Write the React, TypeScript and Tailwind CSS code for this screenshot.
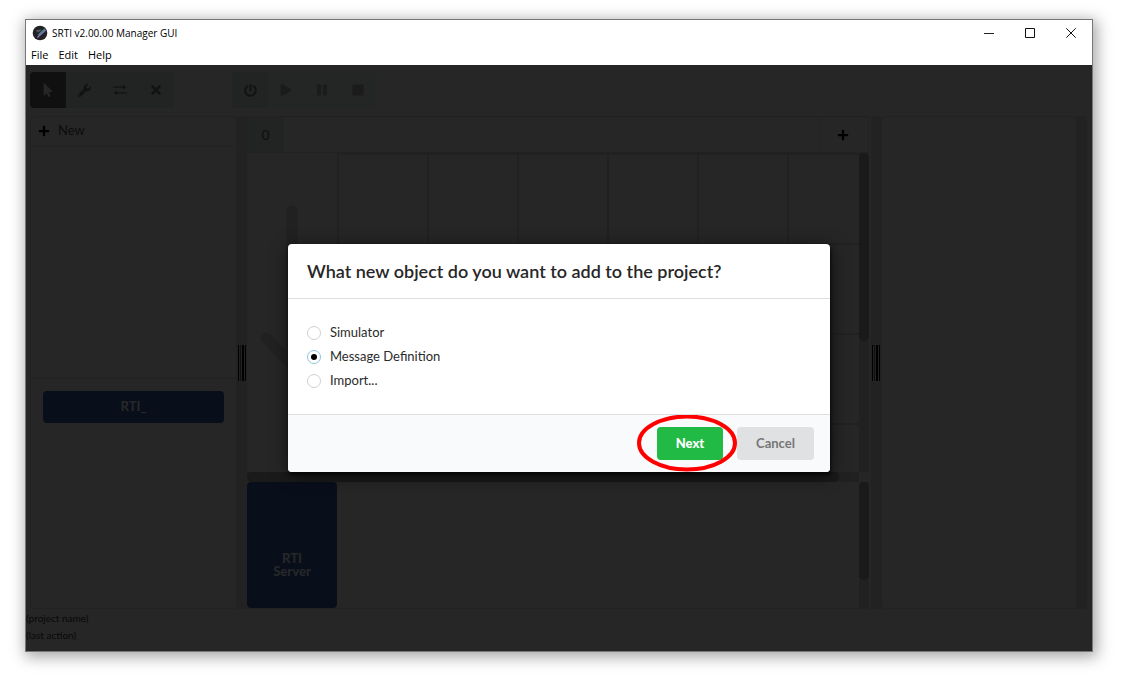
import { useState } from 'react';
import type { ReactNode } from 'react';
import {
  FaMousePointer,
  FaWrench,
  FaTimes,
  FaPowerOff,
  FaPlay,
  FaPlus,
} from 'react-icons/fa';

const MENUS = ['File', 'Edit', 'Help'];
const OBJECT_TYPES = ['Simulator', 'Message Definition', 'Import...'];
const STAGE_ROWS = [0, 1, 2, 3];
const STAGE_COLUMNS = [0, 1, 2, 3, 4, 5];

function AppLogo() {
  return (
    <svg viewBox="0 0 16 16" className="size-4" aria-hidden="true">
      <circle cx="8" cy="8" r="7.3" fill="#222226" />
      <path d="M6.200 10.200 12.800 4" stroke="#3f8f88" strokeWidth="1.300" />
      <path d="M5.400 12.600 13.600 5" stroke="#8a6fc0" strokeWidth="1.300" />
      <path d="M3.600 5.400 7.500 4.600 10 5.200 6 7.400Z" fill="#55555c" />
    </svg>
  );
}

function ExchangeIcon() {
  return (
    <svg viewBox="0 0 14 12" width="14" height="12" fill="currentColor" aria-hidden="true">
      <path d="M.6 2.600h9.400V.8L13.400 3.200 10 5.600V3.800H.6Z" />
      <path d="M13.400 8.200H4V6.400L.6 8.800 4 11.200V9.400h9.400Z" />
    </svg>
  );
}

function PauseIcon() {
  return (
    <svg viewBox="0 0 12 12" width="12" height="12" fill="currentColor" aria-hidden="true">
      <rect x="1" y=".5" width="4" height="11" rx=".8" />
      <rect x="7" y=".5" width="4" height="11" rx=".8" />
    </svg>
  );
}

function StopIcon() {
  return (
    <svg viewBox="0 0 12 12" width="12" height="12" fill="currentColor" aria-hidden="true">
      <rect x=".5" y=".5" width="11" height="11" rx="1" />
    </svg>
  );
}

function ToolButton({ label, className, children }: { label: string; className: string; children: ReactNode }) {
  return (
    <button type="button" aria-label={label} className={`flex size-9 items-center justify-center text-sm ${className}`}>
      {children}
    </button>
  );
}

function TitleBar() {
  return (
    <header className="bg-white font-['Open_Sans',sans-serif] text-[11px] text-black">
      <div className="flex h-[26px] items-center justify-between pl-[6px]">
        <div className="flex items-center gap-1">
          <AppLogo />
          <span className="text-[10px]">SRTI v2.00.00 Manager GUI</span>
        </div>
        <div className="flex pr-px">
          <button type="button" aria-label="Minimize" className="flex h-6 w-[41px] items-center justify-center">
            <svg width="10" height="10" viewBox="0 0 10 10" stroke="#222"><path d="M0 5.500H10" /></svg>
          </button>
          <button type="button" aria-label="Maximize" className="flex h-6 w-[41px] items-center justify-center">
            <svg width="10" height="10" viewBox="0 0 10 10" stroke="#111" fill="none"><path d="M.5 .5H9.500V9.500H.5Z" /></svg>
          </button>
          <button type="button" aria-label="Close" className="flex h-6 w-[41px] items-center justify-center">
            <svg width="10" height="10" viewBox="0 0 10 10" stroke="#111"><path d="M.3 .3 9.700 9.700M9.700 .3 .3 9.700" /></svg>
          </button>
        </div>
      </div>
      <nav className="flex h-[19px] items-center gap-[10px] pl-[5px]">
        {MENUS.map((menu) => (
          <button key={menu} type="button">{menu}</button>
        ))}
      </nav>
    </header>
  );
}

function Toolbar() {
  return (
    <div className="flex gap-[58px] px-1 pt-[7px] pb-2 text-[#121212]">
      <div className="flex overflow-hidden rounded-sm bg-[#212423]">
        <ToolButton label="Select" className="bg-[#101010] text-[#262626]"><FaMousePointer /></ToolButton>
        <ToolButton label="Configure" className=""><FaWrench className="size-[13px]" /></ToolButton>
        <ToolButton label="Transfer" className=""><ExchangeIcon /></ToolButton>
        <ToolButton label="Delete" className=""><FaTimes /></ToolButton>
      </div>
      <div className="flex overflow-hidden rounded-sm bg-[#242525]">
        <ToolButton label="Power" className="bg-[#212423]"><FaPowerOff className="size-[13px]" /></ToolButton>
        <ToolButton label="Play" className="text-[#1b1b1b]"><FaPlay className="size-3" /></ToolButton>
        <ToolButton label="Pause" className="text-[#1b1b1b]"><PauseIcon /></ToolButton>
        <ToolButton label="Stop" className="text-[#1b1b1b]"><StopIcon /></ToolButton>
      </div>
    </div>
  );
}

function Splitter() {
  return (
    <div className="flex w-[10px] shrink-0 items-center justify-center gap-px bg-[#222]">
      <span className="h-9 w-px bg-black" />
      <span className="h-9 w-px bg-[#101010]" />
      <span className="h-9 w-[2px] bg-black" />
      <span className="h-9 w-px bg-black" />
    </div>
  );
}

function ObjectPanel() {
  return (
    <aside className="flex w-[207px] shrink-0 flex-col rounded-sm border border-[#222]">
      <button type="button" className="flex h-[30px] items-center gap-2 border-b border-[#222] px-[7px] pb-0.5 text-[13px] text-[#0c0c0c]">
        <FaPlus className="size-3 text-black" />
        New
      </button>
      <div className="h-[232px] border-b border-[#222]" />
      <div className="px-3 py-3">
        <button type="button" className="h-8 w-full rounded-sm bg-[#090e1b] text-[13px] font-black text-[#262728]">RTI_</button>
      </div>
    </aside>
  );
}

function Stage() {
  return (
    <main className="mr-[2px] flex min-w-0 flex-1 flex-col">
      <div className="flex h-[37px] border-t border-b border-[#212121] text-sm text-[#0e0e0e]">
        <button type="button" className="w-[37px] bg-[#212423]">0</button>
        <div className="flex-1" />
        <button type="button" aria-label="Add stage" className="flex w-[49px] items-center justify-center border-x border-[#232323] pr-1 text-black">
          <FaPlus className="size-3" />
        </button>
      </div>
      <div className="flex h-[319px]">
        <div className="flex min-w-0 flex-1 overflow-hidden">
          <div className="w-[90px] shrink-0 pt-[50px]">
            <svg viewBox="0 0 90 180" className="w-full" fill="none" stroke="#212121" strokeWidth="11" strokeLinecap="round" strokeLinejoin="round" aria-hidden="true">
              <path d="M45 8V162M19 135 45 162 71 135" />
            </svg>
          </div>
          {STAGE_COLUMNS.map((column) => (
            <div key={column} className="w-[90px] shrink-0 border-l-2 border-[#212121]">
              {STAGE_ROWS.map((row) => (
                <div key={row} className="h-[90px] border-t-2 border-[#212121]" />
              ))}
            </div>
          ))}
        </div>
        <div className="w-[10px] shrink-0 bg-[#212121]">
          <div className="h-[188px] rounded-full bg-[#1a1a1a]" />
        </div>
      </div>
      <div className="mr-[10px] h-[10px] bg-[#212121] pr-[20px]">
        <div className="h-full rounded-full bg-[#1a1a1a]" />
      </div>
      <div className="flex flex-1 justify-between border-b border-[#222]">
        <div className="flex w-[90px] flex-col justify-end rounded-sm bg-[#090e1b] px-5 pb-[30px]">
          <p className="text-center text-[13px] leading-[13px] font-black text-[#262728]">RTI Server</p>
        </div>
        <div className="w-[10px] bg-[#212121]">
          <div className="h-[98px] rounded-full bg-[#1a1a1a]" />
        </div>
      </div>
    </main>
  );
}

function PropertiesPanel() {
  return (
    <aside className="flex w-[206px] shrink-0 justify-end rounded-sm border border-[#222]">
      <div className="w-[10px] bg-[#222]" />
    </aside>
  );
}

function NewObjectDialog() {
  const [selected, setSelected] = useState('Message Definition');
  return (
    <div className="absolute inset-0 flex items-center justify-center">
      <section role="dialog" aria-labelledby="dialog-title" className="w-[542px] overflow-hidden rounded-sm bg-white shadow-[1px_3px_3px_0_rgba(0,0,0,0.6),1px_3px_15px_2px_rgba(0,0,0,0.5)]">
        <h2 id="dialog-title" className="border-b border-[#dedede] px-[19px] py-[15px] text-lg leading-6 font-semibold text-[#272727]">
          What new object do you want to add to the project?
        </h2>
        <fieldset className="flex flex-col gap-1 px-[19px] pt-6 pb-[23px]">
          {OBJECT_TYPES.map((type) => (
            <label key={type} className="flex h-5 items-center gap-[9px] text-[13px] text-[#2b2b2b]">
              <input
                type="radio"
                name="object-type"
                checked={selected === type}
                onChange={() => setSelected(type)}
                className="flex size-[14px] appearance-none items-center justify-center rounded-full border border-[#d0d0d1] bg-white checked:border-[#8cc6dc] checked:before:size-[6px] checked:before:rounded-full checked:before:bg-black"
              />
              {type}
            </label>
          ))}
        </fieldset>
        <footer className="flex justify-end gap-[14px] border-t border-[#dddede] bg-[#f9fafb] px-4 py-3 text-[13px] font-bold">
          <div className="relative">
            <button type="button" className="h-[33px] w-[66px] rounded-sm bg-[#21ba45] font-black text-white">Next</button>
            <svg viewBox="0 0 100 58" className="pointer-events-none absolute -top-3 -left-5 h-[58px] w-[100px] max-w-none" fill="none" aria-hidden="true">
              <ellipse cx="50" cy="28" rx="48" ry="26.500" stroke="#ff0000" strokeWidth="4" />
            </svg>
          </div>
          <button type="button" className="h-[33px] w-[77px] rounded-sm bg-[#e0e1e2] text-[#767676]">Cancel</button>
        </footer>
      </section>
    </div>
  );
}

export default function App() {
  return (
    <div className="flex min-h-screen bg-white pt-[19px] pr-[35px] pb-8 pl-[25px] font-['Lato',sans-serif]">
      <div className="flex min-w-0 flex-1 flex-col border border-[#777] shadow-[2px_3px_14px_2px_rgba(0,0,0,0.35)]">
        <TitleBar />
        <div className="relative flex flex-1 flex-col bg-[#262626]">
          <Toolbar />
          <div className="flex flex-1 pr-[5px] pl-1">
            <ObjectPanel />
            <Splitter />
            <Stage />
            <Splitter />
            <PropertiesPanel />
          </div>
          <footer className="flex h-[42px] flex-col pt-px text-[10px] leading-[17px] text-[#080808]">
            <span>(project name)</span>
            <span>(last action)</span>
          </footer>
          <NewObjectDialog />
        </div>
      </div>
    </div>
  );
}
